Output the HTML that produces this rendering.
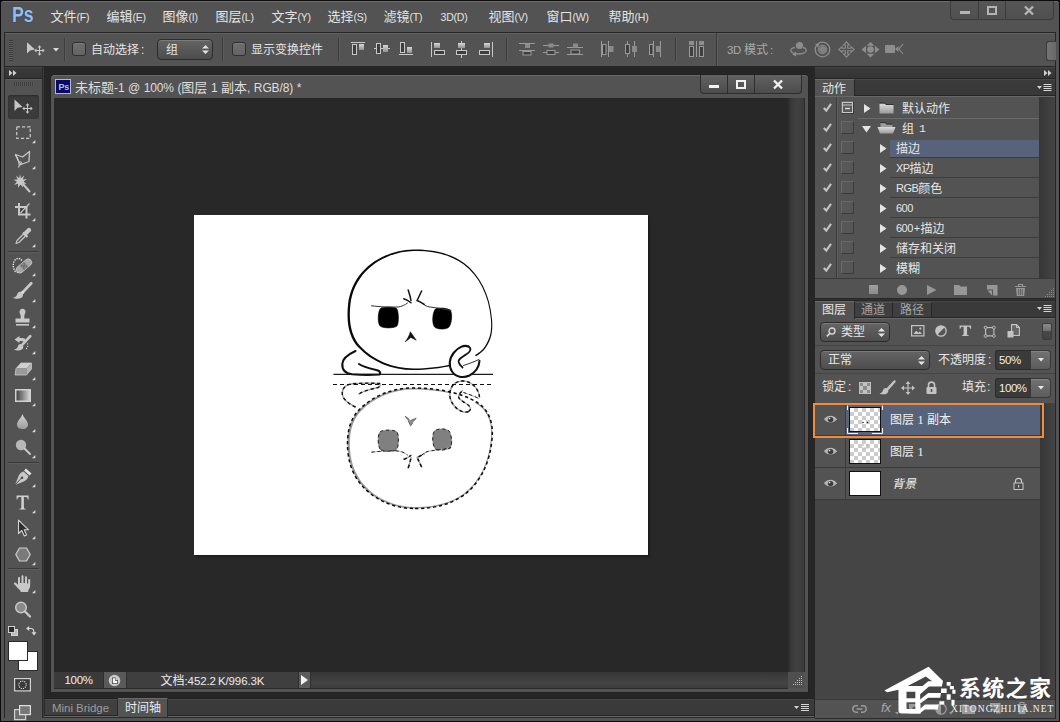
<!DOCTYPE html>
<html lang="zh-CN"><head><meta charset="utf-8"><title>Photoshop</title>
<style>
html,body{margin:0;padding:0;background:#000;}
body{width:1060px;height:722px;overflow:hidden;font-family:"Liberation Sans","Noto Sans CJK SC",sans-serif;}
#app{position:relative;width:1060px;height:722px;overflow:hidden;background:#4f4f4f;}
#app div,#app svg.i{position:absolute;box-sizing:border-box;}
#app div.t{white-space:nowrap;}
svg.i{overflow:visible;}
.art .ol{fill:none;stroke:var(--s,#111);stroke-width:var(--w,1.8);stroke-dasharray:var(--d,none);stroke-linecap:var(--cap,round);}
.art .hd{fill:var(--hf,#0a0a0a);stroke:var(--hs,none);stroke-width:var(--hw,0);stroke-dasharray:var(--d,none);}
.art .hi,.art .hw{fill:var(--hif,#fff);}
.art .ol3{fill:none;stroke:var(--s,#111);stroke-width:var(--w3,2.1);stroke-dasharray:var(--d,none);stroke-linecap:var(--cap,round);}
.art .ol2{fill:none;stroke:var(--s,#111);stroke-width:var(--w2,1.8);stroke-dasharray:var(--d,none);stroke-linecap:var(--cap,round);}
.art .eye{fill:var(--ef,#000);stroke:var(--es,#000);stroke-width:var(--ew,.6);stroke-dasharray:var(--d,none);}
.art .th{fill:none;stroke:var(--ts,#333);stroke-width:1;stroke-dasharray:var(--d,none);stroke-linecap:var(--cap,round);}
.art .th2{fill:none;stroke:var(--s,#111);stroke-width:1.5;stroke-dasharray:var(--d,none);stroke-linecap:var(--cap,round);}
.art .fl{fill:var(--ff,#111);stroke:var(--fs,#111);stroke-width:.6;stroke-dasharray:var(--d,none);}
.art .refl{--w3:1.4;--hf:#9a9a9a;--s:#a2a2a2;--w:1.3;--w2:1.2;--ef:#808080;--es:#808080;--ts:#b4b4b4;--ff:#909090;--fs:#909090;}
.art .ants{--w3:1.4;--hf:none;--hif:none;--hs:#0a0a0a;--hw:1.5;--s:#111;--w:1.1;--w2:1.4;--ef:none;--es:#222;--ew:1;--ts:#222;--ff:none;--fs:#333;--d:3.2 2.8;--cap:butt;}

</style></head>
<body>
<div id="app">
<div style="left:0px;top:0px;width:1060px;height:722px;background:#0c0c0c;"></div><div style="left:1px;top:1px;width:1058px;height:720px;background:#545454;border-radius:3px 3px 0 0;"></div><div style="left:1px;top:1px;width:1058px;height:31px;background:#535353;border-top:1px solid #6c6c6c;border-radius:3px 3px 0 0;"></div><div class="t" style="left:11.5px;top:2px;font-size:22px;line-height:25px;font-weight:bold;color:#96bdea;transform:scaleX(.8);transform-origin:0 0;text-shadow:0 0 1.5px #27436b,0 0 1px #27436b;">Ps</div><div class="t" aria-label="文件(F)" style="left:50.5px;top:8px;font-size:13px;line-height:17px;color:#e4e4e4;">文件<span style="font-size:10.5px;letter-spacing:-0.2px">(F)</span></div><div class="t" aria-label="编辑(E)" style="left:106.5px;top:8px;font-size:13px;line-height:17px;color:#e4e4e4;">编辑<span style="font-size:10.5px;letter-spacing:-0.2px">(E)</span></div><div class="t" aria-label="图像(I)" style="left:162.5px;top:8px;font-size:13px;line-height:17px;color:#e4e4e4;">图像<span style="font-size:10.5px;letter-spacing:-0.2px">(I)</span></div><div class="t" aria-label="图层(L)" style="left:215.5px;top:8px;font-size:13px;line-height:17px;color:#e4e4e4;">图层<span style="font-size:10.5px;letter-spacing:-0.2px">(L)</span></div><div class="t" aria-label="文字(Y)" style="left:271.5px;top:8px;font-size:13px;line-height:17px;color:#e4e4e4;">文字<span style="font-size:10.5px;letter-spacing:-0.2px">(Y)</span></div><div class="t" aria-label="选择(S)" style="left:327.5px;top:8px;font-size:13px;line-height:17px;color:#e4e4e4;">选择<span style="font-size:10.5px;letter-spacing:-0.2px">(S)</span></div><div class="t" aria-label="滤镜(T)" style="left:383.5px;top:8px;font-size:13px;line-height:17px;color:#e4e4e4;">滤镜<span style="font-size:10.5px;letter-spacing:-0.2px">(T)</span></div><div class="t" aria-label="3D(D)" style="left:440.5px;top:8px;font-size:13px;line-height:17px;color:#e4e4e4;"><span style="font-size:10.5px;letter-spacing:-0.2px">3D(D)</span></div><div class="t" aria-label="视图(V)" style="left:488.5px;top:8px;font-size:13px;line-height:17px;color:#e4e4e4;">视图<span style="font-size:10.5px;letter-spacing:-0.2px">(V)</span></div><div class="t" aria-label="窗口(W)" style="left:546.5px;top:8px;font-size:13px;line-height:17px;color:#e4e4e4;">窗口<span style="font-size:10.5px;letter-spacing:-0.2px">(W)</span></div><div class="t" aria-label="帮助(H)" style="left:608.5px;top:8px;font-size:13px;line-height:17px;color:#e4e4e4;">帮助<span style="font-size:10.5px;letter-spacing:-0.2px">(H)</span></div><div style="left:950px;top:1px;width:104px;height:19px;border:1px solid #3b3b3b;border-top:none;border-radius:0 0 4px 4px;background:linear-gradient(#565656,#505050);"></div><div style="left:978px;top:1px;width:1px;height:18px;background:#3b3b3b;"></div><div style="left:1005px;top:1px;width:1px;height:18px;background:#3b3b3b;"></div><div style="left:960px;top:11px;width:10px;height:3px;background:#b4b4b4;"></div><div style="left:987px;top:6px;width:10px;height:9px;border:2px solid #b4b4b4;"></div><svg class="i" style="left:1024px;top:6px;" width="10" height="9" viewBox="0 0 10 9"><path d="M1 0.5L9 8.5M9 0.5L1 8.5" stroke="#b4b4b4" stroke-width="2.4" fill="none"/></svg><div style="left:4px;top:32px;width:1052px;height:35px;background:#535353;border:1px solid #262626;"></div><div style="left:5px;top:33px;width:1050px;height:1px;background:#626262;"></div><div style="left:9px;top:40px;width:4px;height:21px;background:repeating-linear-gradient(#3a3a3a 0 1px,#5e5e5e 1px 2px);"></div><svg class="i" style="left:26px;top:41px;" width="20" height="16" viewBox="0 0 20 16"><path d="M1 1.2V12.6L4 9.4L9 8.6Z" fill="#c9c9c9"/><path d="M13.5 5.5v8M9.5 9.5h8" stroke="#c9c9c9" stroke-width="1.1" fill="none"/><path d="M13.5 4.3l-1.9 2.2h3.8zM13.5 14.7l-1.9-2.2h3.8zM8.3 9.5l2.2-1.9v3.8zM18.7 9.5l-2.2-1.9v3.8z" fill="#c9c9c9"/></svg><svg class="i" style="left:53px;top:48px;" width="6" height="4" viewBox="0 0 6 4"><path d="M0 0h6l-3 3.5z" fill="#dcdcdc"/></svg><div style="left:64px;top:38px;width:1px;height:23px;background:#3c3c3c;"></div><div style="left:65px;top:38px;width:1px;height:23px;background:#5c5c5c;"></div><div style="left:72px;top:42px;width:14px;height:14px;background:linear-gradient(#6e6e6e,#646464);border:1px solid #2e2e2e;border-radius:3px;box-shadow:inset 0 1px 0 #7d7d7d;"></div><div class="t" aria-label="自动选择:" style="left:91px;top:42px;font-size:12px;line-height:16px;color:#e4e4e4;">自动选择<span style="margin-left:2px">:</span></div><div style="left:157px;top:39px;width:56px;height:21px;background:linear-gradient(#646464,#4c4c4c);border:1px solid #2c2c2c;border-radius:4px;box-shadow:inset 0 1px 0 #7a7a7a;"></div><div class="t" aria-label="组" style="left:166px;top:42px;font-size:12px;line-height:16px;color:#e4e4e4;">组</div><svg class="i" style="left:202px;top:45px;" width="7" height="9" viewBox="0 0 7 9"><path d="M0 3.5L3.5 0L7 3.5ZM0 5.5L3.5 9L7 5.5Z" fill="#e0e0e0"/></svg><div style="left:222px;top:38px;width:1px;height:23px;background:#3c3c3c;"></div><div style="left:223px;top:38px;width:1px;height:23px;background:#5c5c5c;"></div><div style="left:232px;top:42px;width:14px;height:14px;background:linear-gradient(#6e6e6e,#646464);border:1px solid #2e2e2e;border-radius:3px;box-shadow:inset 0 1px 0 #7d7d7d;"></div><div class="t" aria-label="显示变换控件" style="left:251px;top:42px;font-size:12px;line-height:16px;color:#e4e4e4;">显示变换控件</div><div style="left:338px;top:38px;width:1px;height:23px;background:#3c3c3c;"></div><div style="left:339px;top:38px;width:1px;height:23px;background:#5c5c5c;"></div><svg width="0" height="0" style="position:absolute"><defs><linearGradient id="ag" x1="0" y1="0" x2="0" y2="1"><stop offset="0" stop-color="#d8d8d8"/><stop offset="1" stop-color="#909090"/></linearGradient><linearGradient id="agd" x1="0" y1="0" x2="0" y2="1"><stop offset="0" stop-color="#a0a0a0"/><stop offset="1" stop-color="#787878"/></linearGradient></defs></svg><svg class="i" style="left:351px;top:41px;" width="15" height="15" viewBox="0 0 15 15"><path d="M0 1.5h14" stroke="#c8c8c8" stroke-width="1"/><rect x="1.5" y="3.5" width="4" height="10" fill="#3e3e3e" stroke="#c8c8c8"/><rect x="8" y="3" width="5" height="6" fill="url(#ag)"/></svg><svg class="i" style="left:374px;top:41px;" width="17" height="15" viewBox="0 0 17 15"><path d="M0 7.5h16" stroke="#c8c8c8" stroke-width="1"/><rect x="2.5" y="2.5" width="4" height="10" fill="#3e3e3e" stroke="#c8c8c8"/><rect x="9" y="4" width="5" height="7" fill="url(#ag)"/></svg><svg class="i" style="left:399px;top:41px;" width="15" height="15" viewBox="0 0 15 15"><path d="M0 13.5h14" stroke="#c8c8c8" stroke-width="1"/><rect x="1.5" y="1.5" width="4" height="10" fill="#3e3e3e" stroke="#c8c8c8"/><rect x="8" y="6" width="5" height="6" fill="url(#ag)"/></svg><svg class="i" style="left:431px;top:41px;" width="15" height="16" viewBox="0 0 15 16"><path d="M0.5 1v15" stroke="#c8c8c8" stroke-width="1"/><rect x="3" y="2" width="6" height="5" fill="url(#ag)"/><rect x="3.5" y="9.5" width="10" height="4" fill="#3e3e3e" stroke="#c8c8c8"/></svg><svg class="i" style="left:455px;top:41px;" width="13" height="17" viewBox="0 0 13 17"><path d="M6.5 0v17" stroke="#c8c8c8" stroke-width="1"/><rect x="3" y="2" width="7" height="5" fill="url(#ag)"/><rect x="1.5" y="9.5" width="10" height="4" fill="#3e3e3e" stroke="#c8c8c8"/></svg><svg class="i" style="left:479px;top:41px;" width="14" height="16" viewBox="0 0 14 16"><path d="M13.5 1v15" stroke="#c8c8c8" stroke-width="1"/><rect x="5" y="2" width="6" height="5" fill="url(#ag)"/><rect x="0.5" y="9.5" width="10" height="4" fill="#3e3e3e" stroke="#c8c8c8"/></svg><div style="left:506px;top:38px;width:1px;height:23px;background:#3c3c3c;"></div><div style="left:507px;top:38px;width:1px;height:23px;background:#5c5c5c;"></div><svg class="i" style="left:519px;top:43px;" width="17" height="13" viewBox="0 0 17 13"><path d="M0 0.5h16M0 7.5h16" stroke="#9a9a9a" stroke-width="1"/><rect x="6" y="1" width="5" height="4" fill="#8a8a8a"/><rect x="4" y="8.5" width="8" height="3.5" fill="#3e3e3e" stroke="#9a9a9a" stroke-width="1"/></svg><svg class="i" style="left:543px;top:43px;" width="17" height="13" viewBox="0 0 17 13"><path d="M0 2.5h16M0 9.5h16" stroke="#9a9a9a" stroke-width="1"/><rect x="5.5" y="0.5" width="5" height="4" fill="#8a8a8a"/><rect x="4" y="7.5" width="8" height="4" fill="#3e3e3e" stroke="#9a9a9a" stroke-width="1"/></svg><svg class="i" style="left:567px;top:43px;" width="17" height="13" viewBox="0 0 17 13"><path d="M0 4.5h16M0 11.5h16" stroke="#9a9a9a" stroke-width="1"/><rect x="6" y="0.5" width="5" height="4" fill="#8a8a8a"/><rect x="4" y="7" width="8.5" height="4" fill="#3e3e3e" stroke="#9a9a9a" stroke-width="1"/></svg><svg class="i" style="left:600px;top:41px;" width="15" height="17" viewBox="0 0 15 17"><path d="M1.5 0v16M8.5 0v16" stroke="#9a9a9a" stroke-width="1"/><rect x="2.5" y="3.5" width="3.5" height="10" fill="#3e3e3e" stroke="#9a9a9a" stroke-width="1"/><rect x="9" y="5" width="4.5" height="6" fill="#8a8a8a"/></svg><svg class="i" style="left:624px;top:41px;" width="15" height="17" viewBox="0 0 15 17"><path d="M3.5 0v16M10.5 0v16" stroke="#9a9a9a" stroke-width="1"/><rect x="1.5" y="3.5" width="4" height="9" fill="#3e3e3e" stroke="#9a9a9a" stroke-width="1"/><rect x="8" y="5" width="5" height="6" fill="#8a8a8a"/></svg><svg class="i" style="left:648px;top:41px;" width="15" height="17" viewBox="0 0 15 17"><path d="M5.5 0v16M12.5 0v16" stroke="#9a9a9a" stroke-width="1"/><rect x="1.5" y="3.5" width="3.5" height="10" fill="#3e3e3e" stroke="#9a9a9a" stroke-width="1"/><rect x="8" y="5" width="4.5" height="6" fill="#8a8a8a"/></svg><div style="left:675px;top:38px;width:1px;height:23px;background:#3c3c3c;"></div><div style="left:676px;top:38px;width:1px;height:23px;background:#5c5c5c;"></div><svg class="i" style="left:688px;top:40px;" width="17" height="17" viewBox="0 0 17 17"><rect x="1" y="1" width="5" height="4" fill="#8e8e8e"/><rect x="11" y="1" width="5" height="4" fill="#8e8e8e"/><rect x="1.5" y="6.5" width="4" height="10" fill="#3e3e3e" stroke="#9a9a9a"/><rect x="11.5" y="6.5" width="4" height="10" fill="#3e3e3e" stroke="#9a9a9a"/><path d="M8.5 1v16" stroke="#9a9a9a" stroke-width="1"/></svg><div style="left:716px;top:33px;width:1px;height:33px;background:#3a3a3a;"></div><div style="left:717px;top:33px;width:1px;height:33px;background:#5e5e5e;"></div><div class="t" aria-label="3D 模式:" style="left:727px;top:42px;font-size:12px;line-height:16px;color:#a9a9a9;"><span style="font-size:11.5px;letter-spacing:-0.3px">3D </span>模式<span style="display:inline-block;width:2px"></span><span style="font-size:11.5px;letter-spacing:-0.3px">:</span></div><svg class="i" style="left:789px;top:41px;" width="19" height="15" viewBox="0 0 19 15"><circle cx="10.5" cy="4.5" r="3.6" fill="#8d8d8d"/><path d="M6 6.5C2 7 0.5 9.5 3 11.5C6 13.5 13 13.5 16 11.5C18.5 9.5 17 7 14 6.5" fill="none" stroke="#8d8d8d" stroke-width="1.3"/><path d="M3.5 13.5l3.5-3v5z" fill="#8d8d8d"/></svg><svg class="i" style="left:814px;top:41px;" width="17" height="17" viewBox="0 0 17 17"><circle cx="8.5" cy="8.5" r="7.3" fill="none" stroke="#8d8d8d" stroke-width="1.3"/><circle cx="8.5" cy="8.5" r="3.6" fill="#8d8d8d" opacity=".8"/><circle cx="8.5" cy="8.5" r="4.3" fill="none" stroke="#8d8d8d" stroke-width="1"/><path d="M1 3l4.5-.5-1.5 4z" fill="#8d8d8d"/></svg><svg class="i" style="left:838px;top:41px;" width="17" height="17" viewBox="0 0 17 17"><path d="M8.5 0.8L11.3 4H9.7V7.3H13V5.7L16.2 8.5L13 11.3V9.7H9.7V13H11.3L8.5 16.2L5.7 13H7.3V9.7H4V11.3L0.8 8.5L4 5.7V7.3H7.3V4H5.7Z" fill="none" stroke="#8d8d8d" stroke-width="1.1"/></svg><svg class="i" style="left:861px;top:42px;" width="19" height="16" viewBox="0 0 19 16"><circle cx="9.5" cy="7.5" r="3.3" fill="#8d8d8d"/><path d="M9.5 0l4 3.8h-8zM9.5 15.5l4-3.8h-8zM0.5 7.5l4.6-3.8v7.6zM18.5 7.5l-4.6-3.8v7.6z" fill="#8d8d8d"/></svg><svg class="i" style="left:885px;top:44px;" width="19" height="11" viewBox="0 0 19 11"><rect x="0" y="1" width="10" height="8" rx="1" fill="#8d8d8d"/><path d="M10 5l3.5-3v6z" fill="#8d8d8d"/><path d="M18 0l-4 5l4 5" fill="none" stroke="#8d8d8d" stroke-width="1.1"/></svg><div style="left:1046px;top:41px;width:10px;height:20px;background:linear-gradient(90deg,#757575,#686868);border:1px solid #3a3a3a;border-right:none;border-radius:3px 0 0 3px;"></div><div style="left:4px;top:67px;width:1px;height:651px;background:#262626;"></div><div style="left:5px;top:67px;width:37px;height:12px;background:linear-gradient(#3b3b3b,#343434);border-top:1px solid #454545;border-bottom:1px solid #262626;"></div><svg class="i" style="left:9px;top:70px;" width="8" height="6" viewBox="0 0 8 6"><path d="M0 0l3.5 3l-3.5 3zM4 0l3.5 3l-3.5 3z" fill="#d0d0d0"/></svg><div style="left:5px;top:79px;width:37px;height:639px;background:#535353;border-top:1px solid #5e5e5e;"></div><div style="left:42px;top:67px;width:1px;height:651px;background:#2a2a2a;"></div><div style="left:43px;top:67px;width:1px;height:651px;background:#3a3a3a;"></div><div style="left:14px;top:82px;width:20px;height:4px;background:repeating-linear-gradient(90deg,#3c3c3c 0 1px,#5a5a5a 1px 2px);"></div><div style="left:8px;top:95px;width:31px;height:24px;background:#3b3b3b;border-radius:3px;box-shadow:inset 0 1px 2px #2a2a2a;"></div><svg class="i" style="left:13px;top:98px;" width="24" height="18" viewBox="0 0 24 18"><path d="M1.5 1.6V13L4.6 9.8L9.6 9Z" fill="#c8c8c8"/><path d="M14.5 6.5v8M10.5 10.5h8" stroke="#c8c8c8" stroke-width="1.1" fill="none"/><path d="M14.5 5.3l-1.9 2.2h3.8zM14.5 15.7l-1.9-2.2h3.8zM9.3 10.5l2.2-1.9v3.8zM19.7 10.5l-2.2-1.9v3.8z" fill="#c8c8c8"/></svg><svg class="i" style="left:16px;top:126px;" width="15" height="13" viewBox="0 0 15 13"><rect x="0.75" y="0.75" width="13.5" height="11.5" fill="none" stroke="#c8c8c8" stroke-width="1.25" stroke-dasharray="3.2 2"/></svg><svg class="i" style="left:32px;top:140px;" width="4" height="4" viewBox="0 0 4 4"><path d="M3.3 0v3.3h-3.3z" fill="#dcdcdc"/></svg><svg class="i" style="left:14px;top:150px;" width="18" height="18" viewBox="0 0 18 18"><path d="M1.5 4.5L8.5 7L15.5 1.5L15 11.5L7 14.5L5 12Z" fill="none" stroke="#c8c8c8" stroke-width="1.3" stroke-linejoin="round"/><path d="M1.5 4.5L5.2 12.5" stroke="#c8c8c8" stroke-width="1.3"/><circle cx="6.3" cy="13.3" r="1.6" fill="none" stroke="#c8c8c8" stroke-width="1"/><path d="M5.5 14.5L4.5 17.5" stroke="#c8c8c8" stroke-width="1.2"/></svg><svg class="i" style="left:32px;top:166px;" width="4" height="4" viewBox="0 0 4 4"><path d="M3.3 0v3.3h-3.3z" fill="#dcdcdc"/></svg><svg class="i" style="left:13px;top:174px;" width="20" height="22" viewBox="0 0 20 22"><path d="M7 0L8 4.2L11.2 1.5L9.8 5.5L14 5L10.6 7.5L13.5 10L9.6 9.6L10 13.5L7.5 10.5L5.2 13.8L5 9.8L1 10.8L4 7.8L0.5 5.8L4.6 5.4L3 1.6L6.2 4.2Z" fill="#c8c8c8"/><path d="M9.5 9.5L17 18" stroke="#c8c8c8" stroke-width="2"/></svg><svg class="i" style="left:32px;top:192px;" width="4" height="4" viewBox="0 0 4 4"><path d="M3.3 0v3.3h-3.3z" fill="#dcdcdc"/></svg><svg class="i" style="left:15px;top:203px;" width="16" height="16" viewBox="0 0 16 16"><path d="M4 0V11.5H15.5M0 4H11.5V15.5" fill="none" stroke="#c8c8c8" stroke-width="2"/><rect x="5.5" y="5.5" width="4.5" height="4.5" fill="#3e3e3e"/><path d="M5.5 10L14.5 0.5" stroke="#c8c8c8" stroke-width="1.1"/></svg><svg class="i" style="left:32px;top:218px;" width="4" height="4" viewBox="0 0 4 4"><path d="M3.3 0v3.3h-3.3z" fill="#dcdcdc"/></svg><svg class="i" style="left:15px;top:227px;" width="18" height="18" viewBox="0 0 18 18"><path d="M1 16.5L2 13.5L9.5 6L11.5 8L4 15.5Z" fill="#5a5a5a" stroke="#c8c8c8" stroke-width="1.1" stroke-linejoin="round"/><path d="M8 5.5L12.5 10" stroke="#c8c8c8" stroke-width="2.2"/><path d="M10.5 6.5L14 3" stroke="#c8c8c8" stroke-width="4.2" stroke-linecap="round"/></svg><svg class="i" style="left:32px;top:244px;" width="4" height="4" viewBox="0 0 4 4"><path d="M3.3 0v3.3h-3.3z" fill="#dcdcdc"/></svg><div style="left:8px;top:251px;width:31px;height:1px;background:#3a3a3a;"></div><div style="left:8px;top:252px;width:31px;height:1px;background:#5d5d5d;"></div><svg class="i" style="left:12px;top:256px;" width="21" height="19" viewBox="0 0 21 19"><path d="M9.8 4.5C8.2 2 5 1.8 3 4C0.6 7 0.8 12 3 15C4 16.2 5.6 16.4 6.8 15.6" fill="none" stroke="#f4f4f4" stroke-width="1.4" stroke-dasharray="1.2 1.2"/><g transform="rotate(-40 12 10)"><rect x="3" y="6.5" width="18" height="7" rx="3.5" fill="#a6a6a6" stroke="#c8c8c8" stroke-width="0.8"/><rect x="9" y="6.5" width="6" height="7" fill="#8a8a8a"/><circle cx="10.5" cy="8.5" r=".6" fill="#444"/><circle cx="13.5" cy="8.5" r=".6" fill="#444"/><circle cx="10.5" cy="11.5" r=".6" fill="#444"/><circle cx="13.5" cy="11.5" r=".6" fill="#444"/><circle cx="12" cy="10" r=".6" fill="#444"/></g></svg><svg class="i" style="left:32px;top:273px;" width="4" height="4" viewBox="0 0 4 4"><path d="M3.3 0v3.3h-3.3z" fill="#dcdcdc"/></svg><svg class="i" style="left:12px;top:282px;" width="21" height="18" viewBox="0 0 21 18"><path d="M19.3 1.2L10.8 10.2" stroke="#c8c8c8" stroke-width="2.7" stroke-linecap="round"/><path d="M11.5 11.5L9.5 9.5" stroke="#e4e4e4" stroke-width="2.4"/><path d="M9.2 10C11.6 11.2 11.6 14.2 9.4 15.8C6.8 17.3 3 16.8 0.8 15.7C4 15.2 4.8 13.6 5.3 12C5.9 10.2 7.7 9.4 9.2 10Z" fill="#c8c8c8"/></svg><svg class="i" style="left:32px;top:299px;" width="4" height="4" viewBox="0 0 4 4"><path d="M3.3 0v3.3h-3.3z" fill="#dcdcdc"/></svg><svg class="i" style="left:14px;top:308px;" width="17" height="19" viewBox="0 0 17 19"><path d="M8.5 0.8C10.5 0.8 11.5 2.3 11.5 3.8C11.5 5.5 10.3 6.5 10.3 8.5V10.5H15.5V14.5H1.5V10.5H6.7V8.5C6.7 6.5 5.5 5.5 5.5 3.8C5.5 2.3 6.5 0.8 8.5 0.8Z" fill="#c8c8c8"/><rect x="2" y="16" width="13" height="1.6" fill="#c8c8c8"/></svg><svg class="i" style="left:32px;top:325px;" width="4" height="4" viewBox="0 0 4 4"><path d="M3.3 0v3.3h-3.3z" fill="#dcdcdc"/></svg><svg class="i" style="left:13px;top:335px;" width="20" height="18" viewBox="0 0 20 18"><path d="M17.3 1.2L9.8 9.2" stroke="#c8c8c8" stroke-width="2.7" stroke-linecap="round"/><path d="M8.6 9.2C10.8 10.4 10.8 13.2 8.8 14.6C6.5 16 3 15.6 0.8 14.6C4 14 4.5 12.6 4.9 11.2C5.4 9.5 7.2 8.7 8.6 9.2Z" fill="#c8c8c8"/><path d="M1.5 4.5L6.5 1V3.2C9 2.8 11.2 3.3 12.8 4.4L11.2 6.8C10 6 8.5 5.7 6.5 6V8Z" fill="#c8c8c8"/><path d="M14.5 8.5C15.5 10.5 14.5 13 12.5 14.5" fill="none" stroke="#e8e8e8" stroke-width="1.1" stroke-dasharray="1 1.4"/></svg><svg class="i" style="left:32px;top:351px;" width="4" height="4" viewBox="0 0 4 4"><path d="M3.3 0v3.3h-3.3z" fill="#dcdcdc"/></svg><svg class="i" style="left:14px;top:362px;" width="19" height="15" viewBox="0 0 19 15"><path d="M7 1H17.5L12.5 6.5H2Z" fill="#d0d0d0"/><path d="M2 6.5H12.5V13H1Z" fill="#9a9a9a"/><path d="M12.5 6.5L17.5 1V7L12.5 13Z" fill="#b4b4b4"/><path d="M7 1H17.5V7L12.5 13H1L2 6.5Z" fill="none" stroke="#c8c8c8" stroke-width="0.8"/></svg><svg class="i" style="left:32px;top:377px;" width="4" height="4" viewBox="0 0 4 4"><path d="M3.3 0v3.3h-3.3z" fill="#dcdcdc"/></svg><svg class="i" style="left:15px;top:389px;" width="16" height="13" viewBox="0 0 16 13"><defs><linearGradient id="gt" x1="0" y1="0" x2="1" y2="0"><stop offset="0" stop-color="#3c3c3c"/><stop offset="1" stop-color="#d8d8d8"/></linearGradient></defs><rect x="0.75" y="0.75" width="14.5" height="11.5" fill="url(#gt)" stroke="#d0d0d0" stroke-width="1.5"/></svg><svg class="i" style="left:32px;top:403px;" width="4" height="4" viewBox="0 0 4 4"><path d="M3.3 0v3.3h-3.3z" fill="#dcdcdc"/></svg><svg class="i" style="left:16px;top:413px;" width="13" height="17" viewBox="0 0 13 17"><defs><linearGradient id="gb" x1="0" y1="0" x2="0" y2="1"><stop offset="0" stop-color="#d4d4d4"/><stop offset="1" stop-color="#9c9c9c"/></linearGradient></defs><path d="M6.5 1C7.5 4.5 12 8 12 11.5C12 14.5 9.5 16.2 6.5 16.2C3.5 16.2 1 14.5 1 11.5C1 8 5.5 4.5 6.5 1Z" fill="url(#gb)"/></svg><svg class="i" style="left:32px;top:429px;" width="4" height="4" viewBox="0 0 4 4"><path d="M3.3 0v3.3h-3.3z" fill="#dcdcdc"/></svg><svg class="i" style="left:15px;top:439px;" width="17" height="17" viewBox="0 0 17 17"><circle cx="6" cy="6" r="5.2" fill="#b8b8b8"/><path d="M9.5 9.5L15 15" stroke="#c8c8c8" stroke-width="2" stroke-linecap="round"/></svg><svg class="i" style="left:32px;top:455px;" width="4" height="4" viewBox="0 0 4 4"><path d="M3.3 0v3.3h-3.3z" fill="#dcdcdc"/></svg><div style="left:8px;top:462px;width:31px;height:1px;background:#3a3a3a;"></div><div style="left:8px;top:463px;width:31px;height:1px;background:#5d5d5d;"></div><svg class="i" style="left:14px;top:467px;" width="19" height="19" viewBox="0 0 19 19"><path d="M12 1.5L17.5 6.5L15.5 8.5L10 3.5Z" fill="#e0e0e0"/><path d="M9.5 4.5L14.5 9C14 12 11.5 14 8.5 15L1 18L4 10.5C5 7.5 7 5 9.5 4.5Z" fill="#c8c8c8"/><path d="M1 18L7.5 11" stroke="#4a4a4a" stroke-width="1"/><circle cx="8" cy="10.7" r="1.3" fill="#4a4a4a"/></svg><svg class="i" style="left:32px;top:484px;" width="4" height="4" viewBox="0 0 4 4"><path d="M3.3 0v3.3h-3.3z" fill="#dcdcdc"/></svg><svg class="i" style="left:16px;top:495px;" width="14" height="15" viewBox="0 0 14 15"><path d="M0.6 0.6H12.6V4.4H11.8C11.6 2.8 11 2.1 9.6 2.1H7.9V12C7.9 13.3 8.3 13.7 9.7 13.8V14.5H3.5V13.8C4.9 13.7 5.3 13.3 5.3 12V2.1H3.6C2.2 2.1 1.6 2.8 1.4 4.4H0.6Z" fill="#cfcfcf"/></svg><svg class="i" style="left:32px;top:510px;" width="4" height="4" viewBox="0 0 4 4"><path d="M3.3 0v3.3h-3.3z" fill="#dcdcdc"/></svg><svg class="i" style="left:17px;top:519px;" width="13" height="19" viewBox="0 0 13 19"><path d="M1.5 1.2V14.5L4.8 11.5L7.3 17L9.6 16L7.2 10.8H11.5Z" fill="#2e2e2e" stroke="#d4d4d4" stroke-width="1.1" stroke-linejoin="round"/></svg><svg class="i" style="left:32px;top:536px;" width="4" height="4" viewBox="0 0 4 4"><path d="M3.3 0v3.3h-3.3z" fill="#dcdcdc"/></svg><svg class="i" style="left:15px;top:547px;" width="16" height="15" viewBox="0 0 16 15"><path d="M4.5 1H11.5L15.2 7.5L11.5 14H4.5L0.8 7.5Z" fill="#7a7a7a" stroke="#d0d0d0" stroke-width="1.2"/></svg><svg class="i" style="left:32px;top:562px;" width="4" height="4" viewBox="0 0 4 4"><path d="M3.3 0v3.3h-3.3z" fill="#dcdcdc"/></svg><div style="left:8px;top:568px;width:31px;height:1px;background:#3a3a3a;"></div><div style="left:8px;top:569px;width:31px;height:1px;background:#5d5d5d;"></div><svg class="i" style="left:13px;top:574px;" width="19" height="19" viewBox="0 0 19 19"><path d="M5 10V4C5 2.6 7 2.6 7 4V9H8.5V2.2C8.5 0.8 10.5 0.8 10.5 2.2V9H12V3.2C12 1.8 14 1.8 14 3.2V9.5H15.2V6C15.2 4.6 17.2 4.6 17.2 6V11C17.2 14 16 15 15.2 16.5V18H7.5V16.5C6 15.5 3.5 12.5 1.2 10.2C0.2 9 1.5 7.8 2.8 8.8L5 10.8Z" fill="#c8c8c8"/></svg><svg class="i" style="left:32px;top:590px;" width="4" height="4" viewBox="0 0 4 4"><path d="M3.3 0v3.3h-3.3z" fill="#dcdcdc"/></svg><svg class="i" style="left:14px;top:600px;" width="18" height="18" viewBox="0 0 18 18"><circle cx="7" cy="7.5" r="5.3" fill="#8a8a8a" stroke="#c8c8c8" stroke-width="1.5"/><path d="M11 11.5L16 16.5" stroke="#c8c8c8" stroke-width="2.4" stroke-linecap="round"/></svg><div style="left:11px;top:629px;width:7px;height:7px;background:#bdbdbd;border:1px solid #d0d0d0;"></div><div style="left:8px;top:626px;width:7px;height:7px;background:#2c2c2c;border:1px solid #cfcfcf;"></div><svg class="i" style="left:26px;top:625px;" width="11" height="11" viewBox="0 0 11 11"><path d="M2.5 3.5H5C7.5 3.5 8 5.5 8 8" fill="none" stroke="#d6d6d6" stroke-width="1.2"/><path d="M0 3.5L3.2 1V6ZM8 10.5L5.5 7.3H10.5Z" fill="#d6d6d6"/></svg><div style="left:18px;top:651px;width:20px;height:20px;background:#fff;border:1px solid #2a2a2a;"></div><div style="left:8px;top:641px;width:20px;height:20px;background:#fff;border:1px solid #2a2a2a;"></div><svg class="i" style="left:14px;top:678px;" width="17" height="14" viewBox="0 0 17 14"><rect x="0.6" y="0.6" width="15.8" height="12.3" fill="#3a3a3a" stroke="#d2d2d2" stroke-width="1.2"/><circle cx="8.5" cy="6.8" r="3.7" fill="none" stroke="#f0f0f0" stroke-width="1.1" stroke-dasharray="1 1.1"/></svg><svg class="i" style="left:14px;top:705px;" width="17" height="15" viewBox="0 0 17 15"><rect x="0.6" y="4.6" width="11" height="10" fill="#6e6e6e" stroke="#d0d0d0" stroke-width="1.2"/><rect x="5.6" y="0.6" width="10.8" height="9" fill="#777" stroke="#e0e0e0" stroke-width="1.2"/><path d="M11.5 10v3" stroke="#d0d0d0" stroke-width="1"/></svg><div style="left:44px;top:67px;width:770px;height:632px;background:#262626;"></div><div style="left:51px;top:75px;width:757px;height:617px;background:#545454;border-radius:4px 4px 0 0;box-shadow:0 0 0 1px #222;"></div><div style="left:51px;top:75px;width:757px;height:23px;background:#535353;border-top:1px solid #6a6a6a;border-radius:4px 4px 0 0;"></div><div style="left:55px;top:79px;width:16px;height:15px;background:#0a0a62;border:1px solid #a9b8e8;"></div><div class="t" style="left:58.5px;top:80.5px;font-size:9px;line-height:13px;font-weight:bold;color:#a9c2f4;letter-spacing:-0.2px;">Ps</div><div class="t" aria-label="未标题-1 @ 100% (图层 1 副本, RGB/8) *" style="left:75px;top:79px;font-size:13px;line-height:17px;color:#dedede;">未标题<span style="font-size:12px;letter-spacing:-0.1px;word-spacing:0.3px">-1 @ 100% (</span>图层<span style="font-size:12px;letter-spacing:-0.1px;word-spacing:0.3px"> 1 </span>副本<span style="font-size:12px;letter-spacing:-0.1px;word-spacing:0.3px">, RGB/8) *</span></div><div style="left:700px;top:75px;width:102px;height:19px;border:1px solid #2e2e2e;border-top:none;border-radius:0 0 4px 4px;background:linear-gradient(#626262,#4c4c4c);"></div><div style="left:727px;top:75px;width:1px;height:18px;background:#2e2e2e;"></div><div style="left:754px;top:75px;width:1px;height:18px;background:#2e2e2e;"></div><div style="left:709px;top:85px;width:10px;height:3px;background:#f2f2f2;"></div><div style="left:736px;top:80px;width:10px;height:9px;border:2px solid #f2f2f2;"></div><svg class="i" style="left:773px;top:80px;" width="10" height="9" viewBox="0 0 10 9"><path d="M1 0.5L9 8.5M9 0.5L1 8.5" stroke="#f2f2f2" stroke-width="2.4" fill="none"/></svg><div style="left:54px;top:98px;width:734px;height:574px;background:#282828;"></div><div style="left:788px;top:98px;width:17px;height:574px;background:linear-gradient(90deg,#2c2c2c,#3b3b3b 25%,#414141 60%,#3a3a3a);border-right:1px solid #2a2a2a;"></div><div style="left:54px;top:672px;width:734px;height:17px;background:linear-gradient(#363636,#444 70%,#3c3c3c);border-bottom:1px solid #2a2a2a;"></div><div style="left:54px;top:672px;width:49px;height:16px;background:#3a3a3a;"></div><div class="t" aria-label="100%" style="left:64.5px;top:672px;font-size:11.5px;line-height:16px;color:#f0f0f0;"><span style="letter-spacing:-0.3px">100%</span></div><div style="left:103px;top:672px;width:24px;height:16px;background:#5a5a5a;border-left:1px solid #2e2e2e;border-right:1px solid #2e2e2e;"></div><svg class="i" style="left:108px;top:674px;" width="13" height="13" viewBox="0 0 13 13"><circle cx="6.5" cy="6.5" r="5.8" fill="#c9c9c9"/><path d="M4 3.5H7.5V6H10V10H4Z" fill="#4a4a4a"/><path d="M4.8 4.3H7V6.7H9.2V9.2H4.8Z" fill="#f4f4f4"/></svg><div style="left:127px;top:672px;width:171px;height:16px;background:#3f3f3f;"></div><div class="t" aria-label="文档:452.2K/996.3K" style="left:160.5px;top:673px;font-size:12px;line-height:16px;color:#ececec;">文档<span style="font-size:11.5px;letter-spacing:-0.1px">:452.2</span><span style="display:inline-block;width:2px"></span><span style="font-size:11.5px;letter-spacing:-0.1px">K/996.3K</span></div><div style="left:298px;top:672px;width:13px;height:16px;background:#5c5c5c;border-left:1px solid #2e2e2e;border-right:1px solid #2e2e2e;"></div><svg class="i" style="left:301px;top:675px;" width="7" height="10" viewBox="0 0 7 10"><path d="M0 0L7 5L0 10Z" fill="#f2f2f2"/></svg><div style="left:788px;top:672px;width:16px;height:16px;background:#4f4f4f;"></div><svg class="i" style="left:791px;top:675px;" width="12" height="12" viewBox="0 0 12 12"><path d="M10.5 1v10M8.5 3v8M6.5 5v6M4.5 7v4M2.5 9v2" stroke="#bdbdbd" stroke-width="1" stroke-dasharray="1 1"/></svg><div style="left:194px;top:215px;width:454px;height:340px;background:#fff;box-shadow:1px 1px 0 #1b1b1b,2px 2px 2px rgba(0,0,0,.25);"></div><svg class="i art" style="left:0;top:0" width="1060" height="722" viewBox="0 0 1060 722">
<defs>
<g id="critter">
<path class="hd" d="M413 249.5C385 250 352 268 348 305C346 325 350 338 358 347C372 362 392 370 413 370C440 370 470 364 484 350C492 340 493 330 492 319C490 295 480 275 464 263C450 253 432 249 413 249.5Z"/><path class="hi" transform="translate(420.6 310) scale(.976 .975) translate(-420 -310)" d="M413 249.5C385 250 352 268 348 305C346 325 350 338 358 347C372 362 392 370 413 370C440 370 470 364 484 350C492 340 493 330 492 319C490 295 480 275 464 263C450 253 432 249 413 249.5Z"/>
<path class="eye" d="M381 308C385 306.5 393 306.5 396 308C399 310 399 323 397 326C394 328.5 383 328.5 380 326C377 322 378 310 381 308Z"/>
<path class="eye" d="M436 308.5C440 307.5 447 308 450 310C453 313 451.5 324 449 327C446 330 437 329.5 434.5 327C431.5 323 432.5 311 436 308.5Z"/>
<path class="th" d="M371.5 305.8C380 306.8 390 307.5 398 307C402 306.5 405 305 407.5 303"/>
<path class="th" d="M421 302C423 304.5 426 306.5 430 307C437 308 444 309 451 310.3"/>
<path class="th2" d="M408.2 290C409.5 294 410.5 297.5 411 300.5M403.8 298.7C406.5 299.5 409 301 411 302.7M421.6 291C420 294.5 418.5 297.5 417.1 300.5C419.5 301.5 422 303 424.2 304.3"/>
<path class="fl" d="M405.2 341.8C407.5 339 409.5 335.2 410.4 331.8C412.3 334.8 414.6 337.6 416.2 340.2C414.2 339 412.2 338 410.7 337.4C409 338.8 407.2 340.4 405.2 341.8Z"/>
<path class="ol3" d="M355.5 351C349 354 342.5 359 342.3 364C342 370 346 373.5 352 374.2C361 375 372 375 379.5 374.5C381 373 380 371.5 378 370.5C372 369 364 367.5 359 364"/>
<path class="hw" d="M468.5 346.5C464 344.5 458 347.5 454 352.5C449 358.5 448.5 366 452 371.5C455.5 377 463 378.5 469.5 375.5C475 372.5 479 367 479.5 361Z"/>
<path class="ol3" d="M468.5 346.5C464 344.5 458 347.5 454 352.5C449 358.5 448.5 366 452 371.5C455.5 377 463 378.5 469.5 375.5C475 372.5 479 367 479.5 361"/>
<path class="ol2" d="M468.5 346.5C472 348.5 470.5 352 466 354.5C461.5 357.5 458 359 458.6 362C459.2 364.5 461 366 462.5 367.5"/>
<path class="th" d="M463.5 365.5C468 364 474 362 479 359.5"/>
</g>
</defs>
<path d="M333.5 374.3H493" stroke="#1c1c1c" stroke-width="1.3" fill="none"/>
<g class="top"><use href="#critter"/></g>
<g class="refl" transform="translate(0 758) scale(1 -1)"><use href="#critter"/></g>
<g class="ants" transform="translate(0 758) scale(1 -1)"><use href="#critter"/></g>
<path d="M333 384.5H491" stroke="#111" stroke-width="1.2" stroke-dasharray="4 3" fill="none"/>
</svg><div style="left:44px;top:698px;width:770px;height:20px;background:#3a3a3a;border-top:1px solid #222;border-bottom:1px solid #2a2a2a;"></div><div style="left:44px;top:699px;width:770px;height:1px;background:#474747;"></div><div style="left:44px;top:715px;width:770px;height:1px;background:#262626;"></div><div style="left:44px;top:716px;width:770px;height:1px;background:#686868;"></div><div style="left:44px;top:699px;width:74px;height:16px;background:#404040;border-right:1px solid #2a2a2a;border-left:1px solid #2a2a2a;border-top:1px solid #4c4c4c;"></div><div class="t" aria-label="Mini Bridge" style="left:52px;top:700px;font-size:11.5px;line-height:16px;color:#9c9c9c;"><span style="letter-spacing:-0.05px">Mini Bridge</span></div><div style="left:118px;top:698px;width:50px;height:19px;background:#535353;border-right:1px solid #2a2a2a;border-top:1px solid #6a6a6a;"></div><div class="t" aria-label="时间轴" style="left:125px;top:700px;font-size:12px;line-height:16px;color:#eaeaea;">时间轴</div><svg class="i" style="left:794px;top:704px;" width="15" height="8" viewBox="0 0 15 8"><path d="M0 2h5l-2.5 3z" fill="#d6d6d6"/><path d="M7 0.5h8M7 2.5h8M7 4.5h8M7 6.5h8" stroke="#d6d6d6" stroke-width="1"/></svg><div style="left:814px;top:67px;width:1px;height:651px;background:#262626;"></div><div style="left:815px;top:67px;width:240px;height:651px;background:#535353;"></div><div style="left:1055px;top:67px;width:1px;height:651px;background:#262626;"></div><div style="left:815px;top:67px;width:240px;height:12px;background:linear-gradient(#3b3b3b,#343434);border-top:1px solid #454545;border-bottom:1px solid #262626;"></div><svg class="i" style="left:1044px;top:70px;" width="8" height="6" viewBox="0 0 8 6"><path d="M0 0l3.5 3l-3.5 3zM4 0l3.5 3l-3.5 3z" fill="#d0d0d0"/></svg><div style="left:815px;top:79px;width:240px;height:18px;background:linear-gradient(#3b3b3b,#383838);border-top:1px solid #474747;border-bottom:1px solid #6a6a6a;"></div><div style="left:815px;top:95px;width:240px;height:1px;background:#262626;"></div><div style="left:815px;top:79px;width:40px;height:18px;background:#535353;border-right:1px solid #262626;border-top:1px solid #6a6a6a;"></div><div class="t" aria-label="动作" style="left:822px;top:81px;font-size:12px;line-height:16px;color:#e6e6e6;">动作</div><svg class="i" style="left:1037px;top:84px;" width="15" height="8" viewBox="0 0 15 8"><path d="M0 2h5l-2.5 3z" fill="#d6d6d6"/><path d="M6.5 0.5h8M6.5 2.5h8M6.5 4.5h8M6.5 6.5h8" stroke="#d6d6d6" stroke-width="1"/></svg><div style="left:815px;top:96px;width:240px;height:1px;background:#686868;"></div><div style="left:1039px;top:97px;width:16px;height:181px;background:linear-gradient(90deg,#363636,#444);"></div><div style="left:836px;top:97px;width:1px;height:181px;background:#3c3c3c;"></div><div style="left:837px;top:97px;width:1px;height:181px;background:#5e5e5e;"></div><svg class="i" style="left:823px;top:103px;" width="9" height="9" viewBox="0 0 9 9"><path d="M0.8 5L3.3 7.6L8 0.9" fill="none" stroke="#c4c4c4" stroke-width="2.1"/></svg><div style="left:841px;top:101px;width:13px;height:13px;background:#575757;border:1px solid;border-color:#696969 #3a3a3a #3a3a3a #696969;"></div><svg class="i" style="left:842px;top:102px;" width="11" height="11" viewBox="0 0 11 11"><rect x="0.5" y="0.5" width="10" height="10" fill="#5a5a5a" stroke="#c8c8c8"/><path d="M1 3h9" stroke="#c8c8c8"/><path d="M3 6.5h5" stroke="#e0e0e0" stroke-width="1.4"/></svg><div style="left:858px;top:118px;width:181px;height:1px;background:#6a6a6a;"></div><svg class="i" style="left:864px;top:104px;" width="7" height="9" viewBox="0 0 7 9"><path d="M0 0L6.5 4.5L0 9Z" fill="#e4e4e4"/></svg><svg class="i" style="left:879px;top:102px;" width="15" height="12" viewBox="0 0 15 12"><defs><linearGradient id="fg" x1="0" y1="0" x2="0" y2="1"><stop offset="0" stop-color="#dcdcdc"/><stop offset="1" stop-color="#9a9a9a"/></linearGradient></defs><path d="M0.5 1.5H5.5L7 3H14.5V11.5H0.5Z" fill="url(#fg)"/><path d="M0.5 1H5.7L7.2 2.5H14.5" fill="none" stroke="#2e2e2e" stroke-width="1"/></svg><div class="t" aria-label="默认动作" style="left:902px;top:101px;font-size:12px;line-height:16px;color:#e6e6e6;">默认动作</div><svg class="i" style="left:823px;top:123px;" width="9" height="9" viewBox="0 0 9 9"><path d="M0.8 5L3.3 7.6L8 0.9" fill="none" stroke="#c4c4c4" stroke-width="2.1"/></svg><div style="left:841px;top:121px;width:13px;height:13px;background:#575757;border:1px solid;border-color:#696969 #3a3a3a #3a3a3a #696969;"></div><svg class="i" style="left:862px;top:126px;" width="9" height="7" viewBox="0 0 9 7"><path d="M0 0H9L4.5 6.5Z" fill="#e4e4e4"/></svg><svg class="i" style="left:877px;top:122px;" width="19" height="12" viewBox="0 0 19 12"><path d="M3.5 1H8L9.5 2.5H15.5V5H3.5Z" fill="#9c9c9c"/><path d="M3.5 0.6H8.2L9.7 2H15.5" fill="none" stroke="#2e2e2e" stroke-width="1"/><path d="M0.5 5H18.5L16 11.5H3Z" fill="url(#fg)"/></svg><div class="t" aria-label="组 1" style="left:902px;top:121px;font-size:12px;line-height:16px;color:#e6e6e6;">组<span style="font-family:'Liberation Mono',monospace;font-size:11.5px;letter-spacing:-2px;position:relative;top:-1px"> 1</span></div><svg class="i" style="left:823px;top:143px;" width="9" height="9" viewBox="0 0 9 9"><path d="M0.8 5L3.3 7.6L8 0.9" fill="none" stroke="#c4c4c4" stroke-width="2.1"/></svg><div style="left:841px;top:141px;width:13px;height:13px;background:#575757;border:1px solid;border-color:#696969 #3a3a3a #3a3a3a #696969;"></div><div style="left:890px;top:140px;width:149px;height:17px;background:#56637b;"></div><div style="left:890px;top:157px;width:149px;height:1px;background:#3d3d3d;"></div><svg class="i" style="left:880px;top:144px;" width="7" height="9" viewBox="0 0 7 9"><path d="M0 0L6.5 4.5L0 9Z" fill="#e4e4e4"/></svg><div class="t" aria-label="描边" style="left:896px;top:141px;font-size:12px;line-height:16px;color:#e6e6e6;">描边</div><svg class="i" style="left:823px;top:163px;" width="9" height="9" viewBox="0 0 9 9"><path d="M0.8 5L3.3 7.6L8 0.9" fill="none" stroke="#c4c4c4" stroke-width="2.1"/></svg><div style="left:841px;top:161px;width:13px;height:13px;background:#575757;border:1px solid;border-color:#696969 #3a3a3a #3a3a3a #696969;"></div><div style="left:890px;top:177px;width:149px;height:1px;background:#3d3d3d;"></div><svg class="i" style="left:880px;top:164px;" width="7" height="9" viewBox="0 0 7 9"><path d="M0 0L6.5 4.5L0 9Z" fill="#e4e4e4"/></svg><div class="t" aria-label="XP描边" style="left:896px;top:161px;font-size:12px;line-height:16px;color:#e6e6e6;"><span style="font-size:11px;letter-spacing:-0.55px;position:relative;top:-0.8px">XP</span>描边</div><svg class="i" style="left:823px;top:183px;" width="9" height="9" viewBox="0 0 9 9"><path d="M0.8 5L3.3 7.6L8 0.9" fill="none" stroke="#c4c4c4" stroke-width="2.1"/></svg><div style="left:841px;top:181px;width:13px;height:13px;background:#575757;border:1px solid;border-color:#696969 #3a3a3a #3a3a3a #696969;"></div><div style="left:890px;top:197px;width:149px;height:1px;background:#3d3d3d;"></div><svg class="i" style="left:880px;top:184px;" width="7" height="9" viewBox="0 0 7 9"><path d="M0 0L6.5 4.5L0 9Z" fill="#e4e4e4"/></svg><div class="t" aria-label="RGB颜色" style="left:896px;top:181px;font-size:12px;line-height:16px;color:#e6e6e6;"><span style="font-size:11px;letter-spacing:-0.55px;position:relative;top:-0.8px">RGB</span>颜色</div><svg class="i" style="left:823px;top:203px;" width="9" height="9" viewBox="0 0 9 9"><path d="M0.8 5L3.3 7.6L8 0.9" fill="none" stroke="#c4c4c4" stroke-width="2.1"/></svg><div style="left:841px;top:201px;width:13px;height:13px;background:#575757;border:1px solid;border-color:#696969 #3a3a3a #3a3a3a #696969;"></div><div style="left:890px;top:217px;width:149px;height:1px;background:#3d3d3d;"></div><svg class="i" style="left:880px;top:204px;" width="7" height="9" viewBox="0 0 7 9"><path d="M0 0L6.5 4.5L0 9Z" fill="#e4e4e4"/></svg><div class="t" aria-label="600" style="left:896px;top:201px;font-size:12px;line-height:16px;color:#e6e6e6;"><span style="font-size:11px;letter-spacing:-0.55px;position:relative;top:-0.8px">600</span></div><svg class="i" style="left:823px;top:223px;" width="9" height="9" viewBox="0 0 9 9"><path d="M0.8 5L3.3 7.6L8 0.9" fill="none" stroke="#c4c4c4" stroke-width="2.1"/></svg><div style="left:841px;top:221px;width:13px;height:13px;background:#575757;border:1px solid;border-color:#696969 #3a3a3a #3a3a3a #696969;"></div><div style="left:890px;top:237px;width:149px;height:1px;background:#3d3d3d;"></div><svg class="i" style="left:880px;top:224px;" width="7" height="9" viewBox="0 0 7 9"><path d="M0 0L6.5 4.5L0 9Z" fill="#e4e4e4"/></svg><div class="t" aria-label="600+描边" style="left:896px;top:221px;font-size:12px;line-height:16px;color:#e6e6e6;"><span style="font-size:11px;letter-spacing:-0.55px;position:relative;top:-0.8px">600</span><span style="display:inline-block;width:1px"></span><span style="font-size:11px;letter-spacing:-0.55px;position:relative;top:-0.8px">+</span><span style="display:inline-block;width:1px"></span>描边</div><svg class="i" style="left:823px;top:243px;" width="9" height="9" viewBox="0 0 9 9"><path d="M0.8 5L3.3 7.6L8 0.9" fill="none" stroke="#c4c4c4" stroke-width="2.1"/></svg><div style="left:841px;top:241px;width:13px;height:13px;background:#575757;border:1px solid;border-color:#696969 #3a3a3a #3a3a3a #696969;"></div><div style="left:890px;top:257px;width:149px;height:1px;background:#3d3d3d;"></div><svg class="i" style="left:880px;top:244px;" width="7" height="9" viewBox="0 0 7 9"><path d="M0 0L6.5 4.5L0 9Z" fill="#e4e4e4"/></svg><div class="t" aria-label="储存和关闭" style="left:896px;top:241px;font-size:12px;line-height:16px;color:#e6e6e6;">储存和关闭</div><svg class="i" style="left:823px;top:263px;" width="9" height="9" viewBox="0 0 9 9"><path d="M0.8 5L3.3 7.6L8 0.9" fill="none" stroke="#c4c4c4" stroke-width="2.1"/></svg><div style="left:841px;top:261px;width:13px;height:13px;background:#575757;border:1px solid;border-color:#696969 #3a3a3a #3a3a3a #696969;"></div><svg class="i" style="left:880px;top:264px;" width="7" height="9" viewBox="0 0 7 9"><path d="M0 0L6.5 4.5L0 9Z" fill="#e4e4e4"/></svg><div class="t" aria-label="模糊" style="left:896px;top:261px;font-size:12px;line-height:16px;color:#e6e6e6;">模糊</div><div style="left:815px;top:278px;width:240px;height:20px;background:#535353;border-top:1px solid #3a3a3a;"></div><div style="left:869px;top:285px;width:9px;height:9px;background:linear-gradient(#a0a0a0,#8c8c8c);"></div><svg class="i" style="left:897px;top:285px;" width="10" height="10" viewBox="0 0 10 10"><circle cx="5" cy="5" r="5" fill="#979797"/></svg><svg class="i" style="left:927px;top:285px;" width="10" height="10" viewBox="0 0 10 10"><path d="M0 0L9.5 5L0 10Z" fill="#979797"/></svg><svg class="i" style="left:954px;top:284px;" width="13" height="11" viewBox="0 0 13 11"><path d="M0 1H5L6.5 2.5H13V11H0Z" fill="#979797"/></svg><svg class="i" style="left:987px;top:285px;" width="11" height="11" viewBox="0 0 11 11"><path d="M0 0H10.5V10.5H6V4.5H0Z" fill="#979797"/><path d="M0.5 5.5H5V10.5Z" fill="#979797"/></svg><svg class="i" style="left:1015px;top:284px;" width="11" height="12" viewBox="0 0 11 12"><path d="M0 2.5H11M3.5 2.5V0.5H7.5V2.5" fill="none" stroke="#979797" stroke-width="1.2"/><path d="M1 4H10L9.2 12H1.8Z" fill="#979797"/><path d="M3.7 5v6M5.5 5v6M7.3 5v6" stroke="#535353" stroke-width=".8"/></svg><svg class="i" style="left:1044px;top:287px;" width="11" height="11" viewBox="0 0 11 11"><path d="M9.5 1v10M7.5 3v8M5.5 5v6M3.5 7v4M1.5 9v2" stroke="#8a8a8a" stroke-width="1" stroke-dasharray="1 1"/></svg><div style="left:815px;top:298px;width:240px;height:3px;background:#262626;"></div><div style="left:815px;top:299px;width:240px;height:1px;background:#333;"></div><div style="left:815px;top:301px;width:240px;height:18px;background:#3a3a3a;border-top:1px solid #474747;border-bottom:1px solid #686868;"></div><div style="left:815px;top:317px;width:240px;height:1px;background:#262626;"></div><div style="left:815px;top:301px;width:40px;height:18px;background:#535353;border-right:1px solid #262626;border-top:1px solid #6a6a6a;"></div><div class="t" aria-label="图层" style="left:822px;top:302px;font-size:12px;line-height:16px;color:#e6e6e6;">图层</div><div style="left:855px;top:302px;width:38px;height:15px;background:#3f3f3f;border-right:1px solid #262626;border-top:1px solid #4e4e4e;"></div><div class="t" aria-label="通道" style="left:861px;top:302px;font-size:12px;line-height:16px;color:#a4a4a4;">通道</div><div style="left:893px;top:302px;width:39px;height:15px;background:#3f3f3f;border-right:1px solid #262626;border-top:1px solid #4e4e4e;"></div><div class="t" aria-label="路径" style="left:900px;top:302px;font-size:12px;line-height:16px;color:#a4a4a4;">路径</div><svg class="i" style="left:1037px;top:305px;" width="15" height="8" viewBox="0 0 15 8"><path d="M0 2h5l-2.5 3z" fill="#d6d6d6"/><path d="M6.5 0.5h8M6.5 2.5h8M6.5 4.5h8M6.5 6.5h8" stroke="#d6d6d6" stroke-width="1"/></svg><div style="left:820px;top:322px;width:70px;height:20px;background:linear-gradient(#656565,#4d4d4d);border:1px solid #2c2c2c;border-radius:4px;box-shadow:inset 0 1px 0 #7a7a7a;"></div><svg class="i" style="left:826px;top:327px;" width="10" height="10" viewBox="0 0 10 10"><circle cx="6" cy="4" r="3" fill="none" stroke="#dcdcdc" stroke-width="1.3"/><path d="M4 6.2L0.8 9.4" stroke="#dcdcdc" stroke-width="1.6"/></svg><div class="t" aria-label="类型" style="left:841px;top:324px;font-size:12px;line-height:16px;color:#e6e6e6;">类型</div><svg class="i" style="left:878px;top:328px;" width="7" height="9" viewBox="0 0 7 9"><path d="M0 3.5L3.5 0L7 3.5ZM0 5.5L3.5 9L7 5.5Z" fill="#e4e4e4"/></svg><svg class="i" style="left:911px;top:325px;" width="14" height="12" viewBox="0 0 14 12"><rect x="0.6" y="0.6" width="12.3" height="10.3" fill="none" stroke="#c4c4c4" stroke-width="1.2"/><path d="M2.5 9L5.3 5.5L7.3 7.8L8.8 6.5L11 9Z" fill="#c4c4c4"/><circle cx="9.3" cy="3.6" r="1.1" fill="#c4c4c4"/></svg><svg class="i" style="left:935px;top:325px;" width="12" height="12" viewBox="0 0 12 12"><circle cx="6" cy="6" r="5.2" fill="#555" stroke="#c4c4c4" stroke-width="1.3"/><path d="M9.7 2.3A5.2 5.2 0 0 0 2.3 9.7Z" fill="#c4c4c4"/></svg><svg class="i" style="left:959px;top:325px;" width="13" height="11" viewBox="0 0 13 11"><path transform="scale(0.96 0.76)" d="M0.6 0.6H12.6V4.8H11.6C11.4 3 10.8 2.4 9.6 2.4H8.4V11.6C8.4 13 8.8 13.5 10.2 13.6V14.5H3V13.6C4.4 13.5 4.8 13 4.8 11.6V2.4H3.6C2.4 2.4 1.8 3 1.6 4.8H0.6Z" fill="#c4c4c4"/></svg><svg class="i" style="left:984px;top:326px;" width="12" height="12" viewBox="0 0 12 12"><rect x="1.6" y="1.6" width="8.3" height="8.3" fill="none" stroke="#c4c4c4" stroke-width="1.1"/><rect x="0.3" y="0.3" width="2.6" height="2.6" rx=".8" fill="#535353" stroke="#c4c4c4" stroke-width=".9"/><rect x="0.3" y="8.6" width="2.6" height="2.6" rx=".8" fill="#535353" stroke="#c4c4c4" stroke-width=".9"/><rect x="8.6" y="0.3" width="2.6" height="2.6" rx=".8" fill="#535353" stroke="#c4c4c4" stroke-width=".9"/><rect x="8.6" y="8.6" width="2.6" height="2.6" rx=".8" fill="#535353" stroke="#c4c4c4" stroke-width=".9"/></svg><svg class="i" style="left:1007px;top:324px;" width="13" height="14" viewBox="0 0 13 14"><path d="M4.5 0.6H9.5L12.4 3.5V11.5H4.5Z" fill="#666" stroke="#c4c4c4" stroke-width="1.1"/><path d="M9.5 0.6V3.5H12.4" fill="none" stroke="#c4c4c4" stroke-width="1"/><rect x="0.5" y="7" width="6" height="6.5" fill="#c4c4c4"/></svg><div style="left:1042px;top:323px;width:10px;height:17px;background:linear-gradient(#8c8c8c 0,#707070 45%,#484848 45%,#424242 100%);border:1px solid #3a3a3a;border-radius:2px;"></div><div style="left:815px;top:345px;width:240px;height:1px;background:#444;"></div><div style="left:820px;top:350px;width:110px;height:20px;background:linear-gradient(#656565,#4d4d4d);border:1px solid #2c2c2c;border-radius:4px;box-shadow:inset 0 1px 0 #7a7a7a;"></div><div class="t" aria-label="正常" style="left:828px;top:352px;font-size:12px;line-height:16px;color:#e6e6e6;">正常</div><svg class="i" style="left:918px;top:356px;" width="7" height="9" viewBox="0 0 7 9"><path d="M0 3.5L3.5 0L7 3.5ZM0 5.5L3.5 9L7 5.5Z" fill="#e4e4e4"/></svg><div class="t" aria-label="不透明度:" style="left:938px;top:352px;font-size:12px;line-height:16px;color:#e6e6e6;">不透明度<span style="display:inline-block;width:2px"></span>:</div><div style="left:995px;top:350px;width:36px;height:20px;background:#3a3a3a;border:1px solid #2c2c2c;border-right:none;border-radius:3px 0 0 3px;"></div><div class="t" aria-label="50%" style="left:999px;top:353px;font-size:11.5px;line-height:15.5px;color:#f0f0f0;"><span style="letter-spacing:-0.45px">50%</span></div><div style="left:1031px;top:350px;width:20px;height:20px;background:linear-gradient(#727272,#5c5c5c);border:1px solid #383838;border-left:none;border-radius:0 4px 4px 0;box-shadow:inset 0 1px 0 #848484;"></div><svg class="i" style="left:1038px;top:358px;" width="6" height="4" viewBox="0 0 6 4"><path d="M0 0H6L3 3.5Z" fill="#e8e8e8"/></svg><div style="left:815px;top:373px;width:240px;height:1px;background:#444;"></div><div class="t" aria-label="锁定:" style="left:822px;top:379px;font-size:12px;line-height:16px;color:#e6e6e6;">锁定<span style="display:inline-block;width:2px"></span>:</div><svg class="i" style="left:859px;top:382px;" width="12" height="12" viewBox="0 0 12 12"><rect width="12" height="12" fill="#c4c4c4"/><path d="M0 0h4v4h-4zM8 0h4v4h-4zM4 4h4v4h-4zM0 8h4v4h-4zM8 8h4v4h-4z" fill="#8c8c8c"/><rect x=".5" y=".5" width="11" height="11" fill="none" stroke="#bdbdbd"/></svg><svg class="i" style="left:879px;top:380px;" width="17" height="15" viewBox="0 0 17 15"><path d="M15.5 1.5L8.8 8.8" stroke="#c4c4c4" stroke-width="2.5" stroke-linecap="round"/><path d="M7.6 8.2C9.8 9.2 9.8 12 8 13.4C5.8 14.8 2.2 14.4 0.4 13.4C3 13 3.6 11.5 4 10.2C4.6 8.6 6.2 7.7 7.6 8.2Z" fill="#c4c4c4"/></svg><svg class="i" style="left:901px;top:381px;" width="14" height="14" viewBox="0 0 14 14"><path d="M7 2v10M2 7h10" stroke="#c4c4c4" stroke-width="1.2"/><path d="M7 0l-2.4 3h4.8zM7 14l-2.4-3h4.8zM0 7l3-2.4v4.8zM14 7l-3-2.4v4.8z" fill="#c4c4c4"/></svg><svg class="i" style="left:926px;top:381px;" width="11" height="13" viewBox="0 0 11 13"><path d="M2.5 6V3.8C2.5 0.2 8.5 0.2 8.5 3.8V6" fill="none" stroke="#c4c4c4" stroke-width="1.6"/><rect x="0.5" y="6" width="10" height="7" rx="1" fill="#c4c4c4"/><rect x="4.7" y="8" width="1.6" height="3" fill="#555"/></svg><div class="t" aria-label="填充:" style="left:962px;top:379px;font-size:12px;line-height:16px;color:#e6e6e6;">填充<span style="display:inline-block;width:1px"></span>:</div><div style="left:995px;top:378px;width:36px;height:20px;background:#3a3a3a;border:1px solid #2c2c2c;border-right:none;border-radius:3px 0 0 3px;"></div><div class="t" aria-label="100%" style="left:999px;top:381px;font-size:11.5px;line-height:15.5px;color:#f0f0f0;"><span style="letter-spacing:-0.45px">100%</span></div><div style="left:1031px;top:378px;width:20px;height:20px;background:linear-gradient(#727272,#5c5c5c);border:1px solid #383838;border-left:none;border-radius:0 4px 4px 0;box-shadow:inset 0 1px 0 #848484;"></div><svg class="i" style="left:1038px;top:386px;" width="6" height="4" viewBox="0 0 6 4"><path d="M0 0H6L3 3.5Z" fill="#e8e8e8"/></svg><div style="left:815px;top:403px;width:225px;height:1px;background:#3a3a3a;"></div><div style="left:815px;top:404px;width:225px;height:295px;background:#454545;"></div><div style="left:1040px;top:403px;width:15px;height:296px;background:linear-gradient(90deg,#363636,#444);"></div><div style="left:815px;top:404px;width:225px;height:32px;background:#535353;border-bottom:1px solid #3a3a3a;"></div><div style="left:846px;top:404px;width:194px;height:31px;background:#56637b;"></div><div style="left:845px;top:404px;width:1px;height:31px;background:#3c3c3c;"></div><svg class="i" style="left:824px;top:414.5px;" width="13" height="9" viewBox="0 0 13 9"><path d="M0.3 4.6C2.8 0.2 10.2 0.2 12.7 4.6C10.2 8.6 2.8 8.6 0.3 4.6Z" fill="#b2b2b2"/><path d="M0.3 4.6C2.8 0.2 10.2 0.2 12.7 4.6" fill="none" stroke="#d0d0d0" stroke-width=".8"/><circle cx="6.6" cy="4.6" r="2.7" fill="#3c3c3c"/><circle cx="5.6" cy="3.6" r=".8" fill="#e8e8e8"/></svg><div style="left:849px;top:407px;width:32px;height:25px;background-color:#fff;background-image:linear-gradient(45deg,#ccc 25%,transparent 25%,transparent 75%,#ccc 75%),linear-gradient(45deg,#ccc 25%,transparent 25%,transparent 75%,#ccc 75%);background-size:8px 8px;background-position:0 0,4px 4px;border:1px solid #111;"></div><div style="left:815px;top:436px;width:225px;height:32px;background:#535353;border-bottom:1px solid #3a3a3a;"></div><div style="left:845px;top:436px;width:1px;height:31px;background:#3c3c3c;"></div><svg class="i" style="left:824px;top:446.5px;" width="13" height="9" viewBox="0 0 13 9"><path d="M0.3 4.6C2.8 0.2 10.2 0.2 12.7 4.6C10.2 8.6 2.8 8.6 0.3 4.6Z" fill="#b2b2b2"/><path d="M0.3 4.6C2.8 0.2 10.2 0.2 12.7 4.6" fill="none" stroke="#d0d0d0" stroke-width=".8"/><circle cx="6.6" cy="4.6" r="2.7" fill="#3c3c3c"/><circle cx="5.6" cy="3.6" r=".8" fill="#e8e8e8"/></svg><div style="left:849px;top:439px;width:32px;height:25px;background-color:#fff;background-image:linear-gradient(45deg,#ccc 25%,transparent 25%,transparent 75%,#ccc 75%),linear-gradient(45deg,#ccc 25%,transparent 25%,transparent 75%,#ccc 75%);background-size:8px 8px;background-position:0 0,4px 4px;border:1px solid #111;"></div><div style="left:815px;top:468px;width:225px;height:32px;background:#535353;border-bottom:1px solid #3a3a3a;"></div><div style="left:845px;top:468px;width:1px;height:31px;background:#3c3c3c;"></div><svg class="i" style="left:824px;top:478.5px;" width="13" height="9" viewBox="0 0 13 9"><path d="M0.3 4.6C2.8 0.2 10.2 0.2 12.7 4.6C10.2 8.6 2.8 8.6 0.3 4.6Z" fill="#b2b2b2"/><path d="M0.3 4.6C2.8 0.2 10.2 0.2 12.7 4.6" fill="none" stroke="#d0d0d0" stroke-width=".8"/><circle cx="6.6" cy="4.6" r="2.7" fill="#3c3c3c"/><circle cx="5.6" cy="3.6" r=".8" fill="#e8e8e8"/></svg><div style="left:849px;top:471px;width:32px;height:25px;background:#fff;border:1px solid #111;"></div><svg class="i" style="left:847px;top:405px;" width="36" height="29" viewBox="0 0 36 29"><path d="M0.5 5V0.5M35.5 5V0.5M0.5 23V28.5H11M35.5 23V28.5H25" fill="none" stroke="#f4f4f4" stroke-width="1"/></svg><svg class="i" style="left:861px;top:420px;" width="9" height="5" viewBox="0 0 9 5"><circle cx="2" cy="2.5" r=".8" fill="#222"/><circle cx="6.5" cy="2.5" r=".8" fill="#222"/></svg><svg class="i" style="left:861px;top:443px;" width="9" height="8" viewBox="0 0 9 8"><circle cx="2" cy="2" r=".7" fill="#999"/><circle cx="6.5" cy="2" r=".7" fill="#999"/><path d="M1 5h7" stroke="#bbb" stroke-width=".8"/></svg><div class="t" aria-label="图层 1 副本" style="left:890px;top:412px;font-size:12px;line-height:16px;color:#f0f0f0;">图层<span style="font-family:'Liberation Serif',serif;font-size:13px"> 1 </span>副本</div><div class="t" aria-label="图层 1" style="left:890px;top:444px;font-size:12px;line-height:16px;color:#ececec;">图层<span style="font-family:'Liberation Serif',serif;font-size:13px"> 1</span></div><div class="t" style="left:893px;top:476px;font-size:12px;line-height:16px;color:#f0f0f0;transform:skewX(-12deg);">背景</div><svg class="i" style="left:1013px;top:477px;" width="11" height="13" viewBox="0 0 11 13"><path d="M2.5 6V3.8C2.5 0.6 8.5 0.6 8.5 3.8V6" fill="none" stroke="#c8c8c8" stroke-width="1.2"/><rect x="1" y="6" width="9" height="6.5" fill="#4a4a4a" stroke="#c8c8c8" stroke-width="1"/><rect x="5" y="8" width="1.2" height="2.5" fill="#c8c8c8"/></svg><div style="left:813px;top:403px;width:231px;height:35px;border:2px solid #ef8b3e;"></div><div style="left:815px;top:699px;width:240px;height:19px;background:#535353;border-top:1px solid #3a3a3a;"></div><div style="left:815px;top:718px;width:241px;height:1px;background:#2c2c2c;"></div><svg class="i" style="left:852px;top:705px;" width="15" height="8" viewBox="0 0 15 8"><path d="M6 0.8H4A3.2 3.2 0 0 0 4 7.2H6M9 0.8H11A3.2 3.2 0 0 1 11 7.2H9M4.5 4H10.5" fill="none" stroke="#9a9a9a" stroke-width="1.5"/></svg><div class="t" style="left:881px;top:700px;font-style:italic;font-size:13.5px;line-height:16px;color:#a6a6a6;letter-spacing:-0.5px;">fx</div><svg class="i" style="left:895px;top:712px;" width="4" height="3" viewBox="0 0 4 3"><path d="M0 0h4l-2 2.5z" fill="#9a9a9a"/></svg><svg class="i" style="left:909px;top:704px;" width="12" height="10" viewBox="0 0 12 10"><rect width="12" height="10" fill="#9a9a9a"/><circle cx="6" cy="5" r="2.6" fill="#535353"/></svg><svg class="i" style="left:935px;top:703px;" width="12" height="12" viewBox="0 0 12 12"><circle cx="6" cy="6" r="5.2" fill="none" stroke="#9a9a9a" stroke-width="1.3"/><path d="M6 .8A5.2 5.2 0 0 0 6 11.2Z" fill="#9a9a9a"/></svg><svg class="i" style="left:949px;top:712px;" width="4" height="3" viewBox="0 0 4 3"><path d="M0 0h4l-2 2.5z" fill="#9a9a9a"/></svg><svg class="i" style="left:962px;top:704px;" width="13" height="10" viewBox="0 0 13 10"><path d="M0 0.5H5L6.5 2H13V10H0Z" fill="#9a9a9a"/></svg><svg class="i" style="left:990px;top:703px;" width="11" height="11" viewBox="0 0 11 11"><path d="M0 0H10.5V10.5H6V4.5H0Z" fill="#9a9a9a"/><path d="M0.5 5.5H5V10.5Z" fill="#9a9a9a"/></svg><svg class="i" style="left:1017px;top:702px;" width="10" height="12" viewBox="0 0 10 12"><path d="M0 2.5H10M3 2.5V0.5H7V2.5" fill="none" stroke="#9a9a9a" stroke-width="1.1"/><path d="M1 4H9L8.3 12H1.7Z" fill="#9a9a9a"/></svg><svg class="i" style="left:880px;top:662px;" width="85" height="58" viewBox="0 0 85 58"><g transform="scale(0.08032)" fill="#fff"><path fill-rule="evenodd" d="M55 355L605 60L785 235L770 305H610L500 400V640H270Q230 640 230 600V345L90 378ZM345 300L570 182L648 240H600L530 300ZM330 370H440V450H330ZM330 500H440V585H330Z"/><path d="M600 385H760L750 445H600L495 520V470Z"/><path d="M560 530H730L720 590H560L490 640V590Z"/><path d="M830 250h50v45h-50zM870 300h50v38h-50zM900 345h40v50h-40zM760 330h70v55h-70zM830 400h50v70h-50zM740 490h60v40h-60zM890 470h38v70h-38z"/></g></svg><div class="t" aria-label="系统之家" style="left:959px;top:677px;font-size:22px;line-height:24px;color:#fff;font-weight:bold;letter-spacing:1.3px;">系统之家</div><div class="t" style="left:951px;top:703px;font-family:'Liberation Serif',serif;font-size:9.5px;line-height:12px;color:#f4f4f4;letter-spacing:1.05px;">XITONGZHIJIA.NET</div>
</div>
</body></html>
